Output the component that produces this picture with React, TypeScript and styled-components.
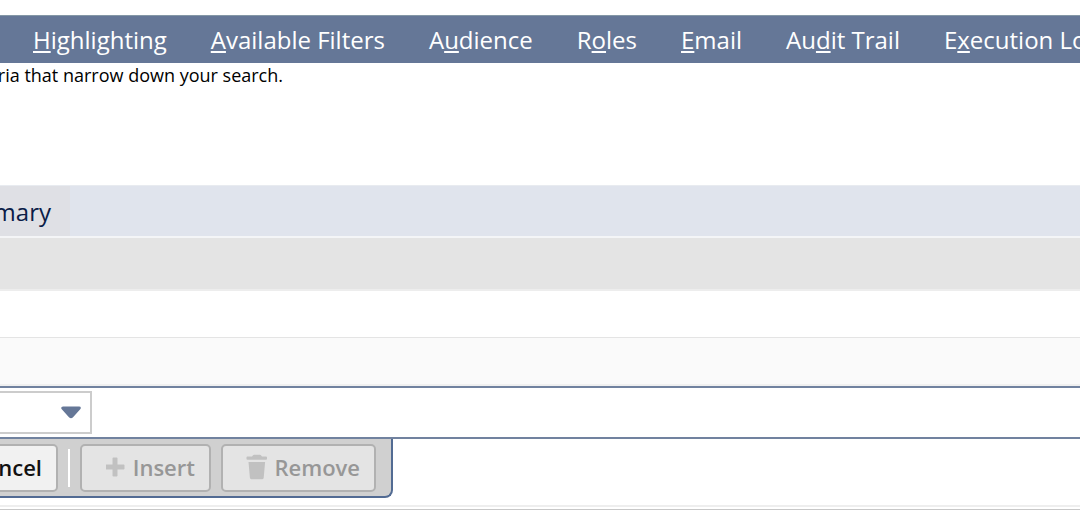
import React from 'react';
import styled, { createGlobalStyle } from 'styled-components';

const GlobalStyle = createGlobalStyle`
  *, *::before, *::after { box-sizing: border-box; }
  body {
    margin: 0;
    background: #fff;
    color: #000;
    font-family: "Open Sans", "Noto Sans", sans-serif;
    overflow-x: hidden;
  }
`;

const Page = styled.div`
  padding-top: 15px;
  overflow: hidden;
`;

const NavBar = styled.nav`
  display: flex;
  align-items: center;
  gap: 44px;
  height: 48px;
  padding-left: 33px;
  overflow: hidden;
  background: #657797;
  border-top: 1px solid #8497a6;
`;

const NavLink = styled.a`
  flex: none;
  color: #fff;
  font-size: 24px;
  font-weight: 500;
  line-height: 32px;
  white-space: nowrap;
  text-decoration: none;
`;

const AccessKey = styled.span`
  text-decoration: underline;
  text-decoration-thickness: 2px;
  text-decoration-skip-ink: none;
  text-underline-offset: 2px;
`;

const Intro = styled.p`
  display: flex;
  justify-content: flex-end;
  width: 283px;
  height: 122px;
  margin: 0;
  font-size: 18px;
  line-height: 24px;
  white-space: nowrap;
`;

const TabStrip = styled.div`
  display: flex;
  height: 53px;
  background: #e0e4ed;
  border-top: 1px solid #e8ebf0;
  border-bottom: 2px solid #f4f5f7;
`;

const Tab = styled.button`
  display: flex;
  justify-content: flex-end;
  align-items: center;
  width: 70px;
  padding: 2px 19px 0 0;
  border: 0;
  background: #dfe0e5;
  color: #0b1c48;
  font-family: inherit;
  font-size: 24px;
  line-height: 32px;
`;

const SubBar = styled.div`
  height: 53px;
  background: #e4e4e4;
  border-bottom: 2px solid #ededed;
`;

const GridHeader = styled.div`
  height: 49px;
  margin-top: 46px;
  background: #fafafa;
  border-top: 1px solid #e4e4e4;
  border-bottom: 2px solid #f0f0f0;
`;

const EditRow = styled.div`
  display: flex;
  align-items: center;
  height: 53px;
  border-top: 2px solid #71829f;
  border-bottom: 2px solid #71829f;
`;

const SelectBox = styled.label`
  display: grid;
  align-items: center;
  width: 92px;
  height: 43px;

  > * { grid-area: 1 / 1; }
`;

const Select = styled.select`
  appearance: none;
  width: 100%;
  height: 100%;
  border: 2px solid #ccc;
  border-left: 0;
  border-radius: 0;
  background: #fff;
  font-family: inherit;
  font-size: 22px;
`;

const Arrow = styled.svg`
  justify-self: end;
  margin-right: 11px;
  pointer-events: none;
`;

const Toolbar = styled.div`
  display: flex;
  justify-content: flex-end;
  align-items: center;
  width: 393px;
  height: 59px;
  padding-right: 15px;
  background: #d0d0d0;
  border: solid #526b93;
  border-width: 0 2px 2px 0;
  border-bottom-right-radius: 8px;
`;

const ToolButton = styled.button<{ $width: number }>`
  display: flex;
  flex: none;
  justify-content: flex-end;
  align-items: center;
  gap: 7px;
  width: ${({ $width }) => $width}px;
  height: 48px;
  padding: 0 14px 2px;
  border: 2px solid #b1b1b1;
  border-radius: 5px;
  background: #f1f1f1;
  color: #111;
  font-family: inherit;
  font-size: 22px;
  font-weight: 600;
  line-height: 30px;

  &:disabled {
    background: #e4e4e4;
    color: #979797;
  }

  & + & { margin-left: 10px; }
`;

const Divider = styled.span`
  flex: none;
  width: 2px;
  height: 38px;
  margin: 0 10px;
  background: #fff;
`;

const Footer = styled.div`
  height: 5px;
  margin-top: 7px;
  border-top: 2px solid #eee;
  border-bottom: 1px solid #c8c8c8;
`;

const navItems: [string, string, string][] = [
  ['', 'H', 'ighlighting'],
  ['', 'A', 'vailable Filters'],
  ['A', 'u', 'dience'],
  ['R', 'o', 'les'],
  ['', 'E', 'mail'],
  ['Au', 'd', 'it Trail'],
  ['E', 'x', 'ecution Log'],
];

const PlusIcon = () => (
  <svg width="20" height="20" viewBox="0 0 20 20" aria-hidden="true">
    <path
      d="M6.500 1.500q0-1 1-1h3q1 0 1 1v6h6q1 0 1 1v3q0 1-1 1h-6v6q0 1-1 1h-3q-1 0-1-1v-6h-6q-1 0-1-1v-3q0-1 1-1h6z"
      fill="#c1c1c1"
    />
  </svg>
);

const TrashIcon = () => (
  <svg width="22" height="26" viewBox="0 0 22 26" aria-hidden="true">
    <path
      d="M2.500 2.500h4.500l1-1.200q.5-.6 1.200-.6h5.600q.7 0 1.200.6l1 1.200h4q1 0 1 1v1.200q0 1-1 1h-18.500q-1 0-1-1v-1.200q0-1 1-1z"
      fill="#c1c1c1"
    />
    <path d="M3.500 8h16.600l-1.400 15.800q-.1 1.400-1.400 1.400h-11q-1.300 0-1.400-1.400z" fill="#c1c1c1" />
  </svg>
);

export default function App() {
  return (
    <>
      <GlobalStyle />
      <Page>
        <NavBar>
          {navItems.map(([before, key, after]) => (
            <NavLink href="#" key={before + key + after}>
              {before}
              <AccessKey>{key}</AccessKey>
              {after}
            </NavLink>
          ))}
        </NavBar>
        <Intro>criteria that narrow down your search.</Intro>
        <TabStrip>
          <Tab type="button">Summary</Tab>
        </TabStrip>
        <SubBar />
        <GridHeader />
        <EditRow>
          <SelectBox>
            <Select aria-label="Column" />
            <Arrow width="20" height="13" viewBox="0 0 20 13" aria-hidden="true">
              <path
                d="M2 .5h16q2 0 1.800 1.500q0 .8-.8 1.500l-7.200 8q-1.800 1.600-3.600 0l-7.200-8q-.8-.7-.8-1.500q0-1.500 1.800-1.500z"
                fill="#657797"
              />
            </Arrow>
          </SelectBox>
        </EditRow>
        <Toolbar>
          <ToolButton type="button" $width={110}>Cancel</ToolButton>
          <Divider />
          <ToolButton type="button" $width={131} disabled>
            <PlusIcon />
            Insert
          </ToolButton>
          <ToolButton type="button" $width={155} disabled>
            <TrashIcon />
            Remove
          </ToolButton>
        </Toolbar>
        <Footer />
      </Page>
    </>
  );
}
